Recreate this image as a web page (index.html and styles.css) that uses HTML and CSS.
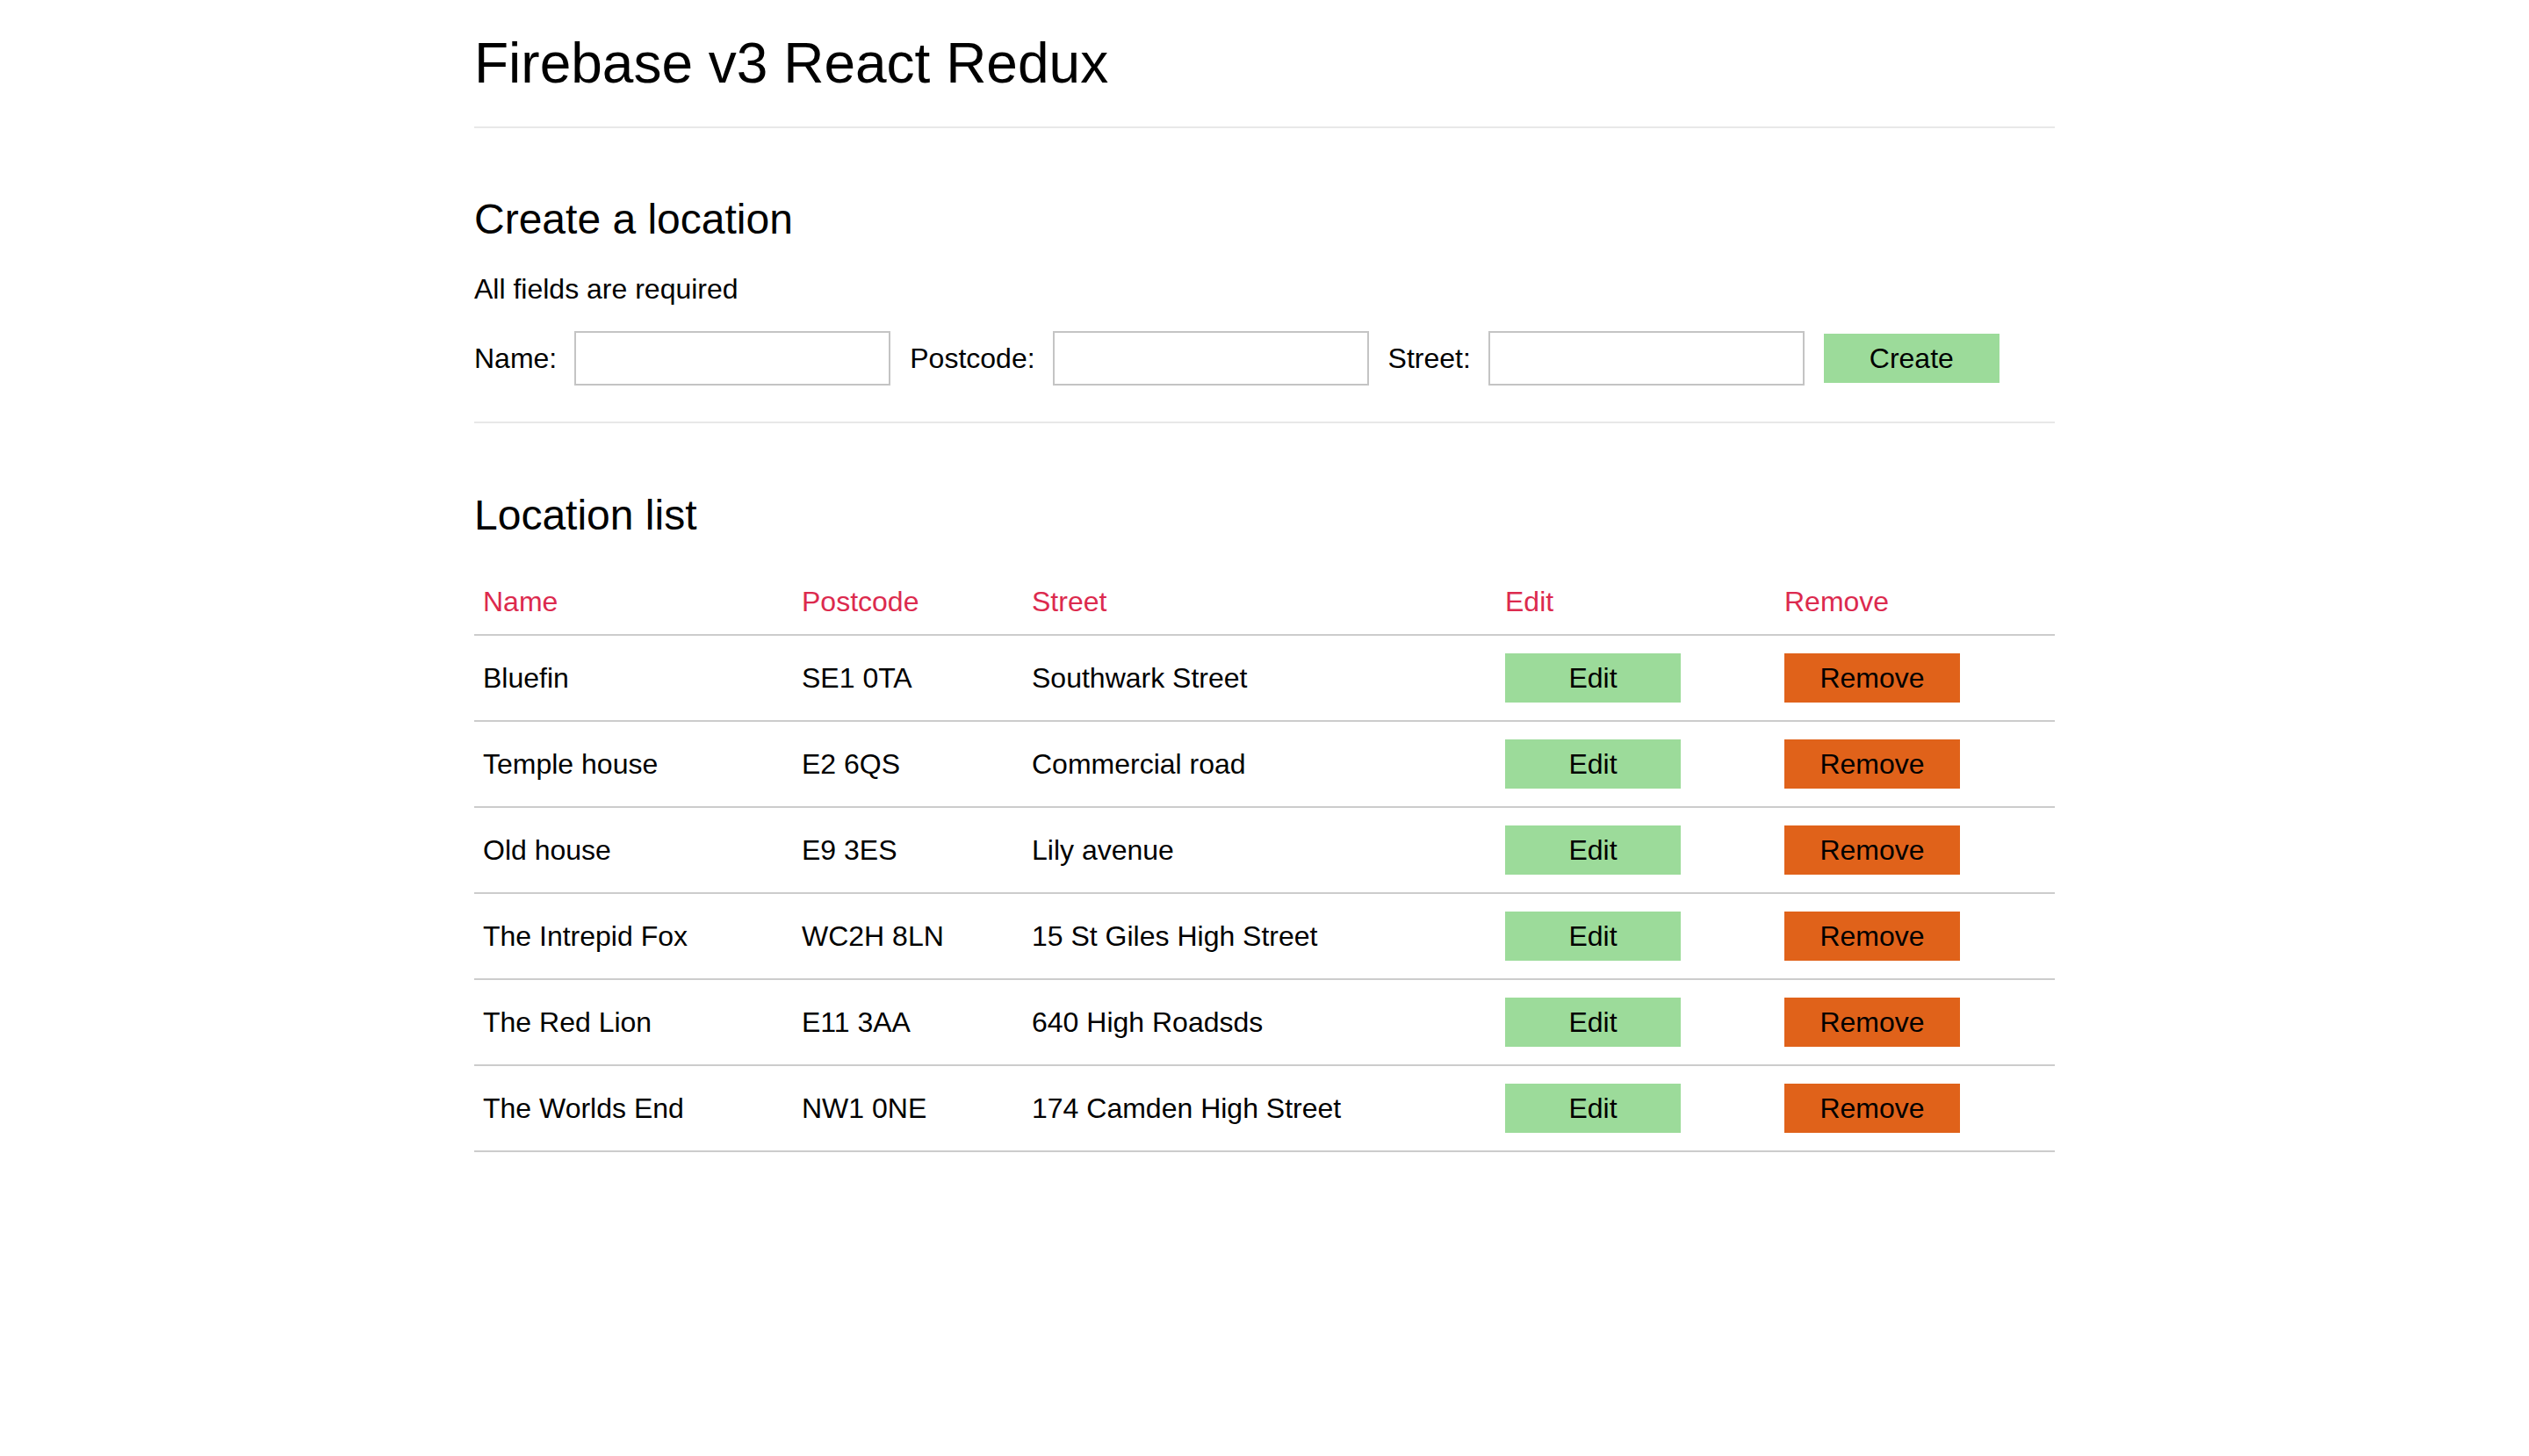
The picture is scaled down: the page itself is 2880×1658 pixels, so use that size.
FILE: index.html
```html
<!DOCTYPE html>
<html lang="en">
<head>
<meta charset="utf-8">
<title>Firebase v3 React Redux</title>
<link rel="stylesheet" href="styles.css">
</head>
<body>
<div class="container">
  <h1 class="page-title">Firebase v3 React Redux</h1>

  <section class="create">
    <h2 class="section-title create-title">Create a location</h2>
    <p class="hint">All fields are required</p>
    <form class="create-form">
      <label class="field-label" for="name">Name:</label>
      <input class="field-input" id="name" type="text">
      <label class="field-label" for="postcode">Postcode:</label>
      <input class="field-input" id="postcode" type="text">
      <label class="field-label" for="street">Street:</label>
      <input class="field-input" id="street" type="text">
      <button class="btn btn-green" type="button">Create</button>
    </form>
  </section>

  <section class="list">
    <h2 class="section-title list-title">Location list</h2>
    <table class="locations">
      <colgroup>
        <col class="c-name"><col class="c-post"><col class="c-street"><col class="c-edit"><col class="c-remove">
      </colgroup>
      <thead>
        <tr><th>Name</th><th>Postcode</th><th>Street</th><th>Edit</th><th>Remove</th></tr>
      </thead>
      <tbody>
        <tr><td>Bluefin</td><td>SE1 0TA</td><td>Southwark Street</td><td><button class="btn btn-green" type="button">Edit</button></td><td><button class="btn btn-orange" type="button">Remove</button></td></tr>
        <tr><td>Temple house</td><td>E2 6QS</td><td>Commercial road</td><td><button class="btn btn-green" type="button">Edit</button></td><td><button class="btn btn-orange" type="button">Remove</button></td></tr>
        <tr><td>Old house</td><td>E9 3ES</td><td>Lily avenue</td><td><button class="btn btn-green" type="button">Edit</button></td><td><button class="btn btn-orange" type="button">Remove</button></td></tr>
        <tr><td>The Intrepid Fox</td><td>WC2H 8LN</td><td>15 St Giles High Street</td><td><button class="btn btn-green" type="button">Edit</button></td><td><button class="btn btn-orange" type="button">Remove</button></td></tr>
        <tr><td>The Red Lion</td><td>E11 3AA</td><td>640 High Roadsds</td><td><button class="btn btn-green" type="button">Edit</button></td><td><button class="btn btn-orange" type="button">Remove</button></td></tr>
        <tr><td>The Worlds End</td><td>NW1 0NE</td><td>174 Camden High Street</td><td><button class="btn btn-green" type="button">Edit</button></td><td><button class="btn btn-orange" type="button">Remove</button></td></tr>
      </tbody>
    </table>
  </section>
</div>
</body>
</html>
```

FILE: styles.css
```css
html, body {
  margin: 0;
  padding: 0;
  background: #ffffff;
}

body {
  font-family: "Liberation Sans", Arial, Helvetica, sans-serif;
  font-size: 32px;
  line-height: 40px;
  color: #000000;
}

.container {
  width: 1800px;
  margin: 0 auto;
}

.page-title {
  margin: 0;
  padding: 36px 0 36px;
  font-size: 64px;
  line-height: 72px;
  font-weight: normal;
  border-bottom: 2px solid #e8e8e8;
}

.create {
  padding-bottom: 41px;
  border-bottom: 2px solid #e8e8e8;
}

.section-title {
  margin: 0;
  font-size: 48px;
  line-height: 56px;
  font-weight: normal;
}

.create-title {
  padding-top: 76px;
}

.hint {
  margin: 31px 0 0;
  font-size: 32px;
  line-height: 40px;
}

.create-form {
  display: flex;
  align-items: center;
  margin-top: 28px;
  height: 62px;
}

.field-label {
  font-size: 32px;
  line-height: 40px;
  margin-right: 20px;
}

.field-input {
  box-sizing: border-box;
  width: 360px;
  height: 62px;
  margin: 0 22px 0 0;
  padding: 0 8px;
  border: 2px solid #c4c4c4;
  background: #ffffff;
  font-family: inherit;
  font-size: 32px;
  outline: none;
}

.btn {
  box-sizing: border-box;
  width: 200px;
  height: 56px;
  padding: 0;
  border: 0;
  font-family: "Liberation Sans", Arial, Helvetica, sans-serif;
  font-size: 32px;
  line-height: 56px;
  color: #000000;
  text-align: center;
  cursor: pointer;
  display: block;
}

.btn-green {
  background: #9cdb9a;
}

.btn-orange {
  background: #e0621a;
}

.list-title {
  padding-top: 77px;
}

.locations {
  width: 1800px;
  margin-top: 31px;
  border-collapse: collapse;
  table-layout: fixed;
}

.c-name { width: 363px; }
.c-post { width: 262px; }
.c-street { width: 539px; }
.c-edit { width: 318px; }
.c-remove { width: 318px; }

.locations th {
  padding: 21px 10px 19px;
  font-size: 32px;
  line-height: 36px;
  font-weight: normal;
  text-align: left;
  color: #dc2a4e;
  border-bottom: 2px solid #cccccc;
}

.locations td {
  padding: 20px 10px;
  height: 56px;
  font-size: 32px;
  line-height: 36px;
  vertical-align: middle;
  border-bottom: 2px solid #cccccc;
}
```
